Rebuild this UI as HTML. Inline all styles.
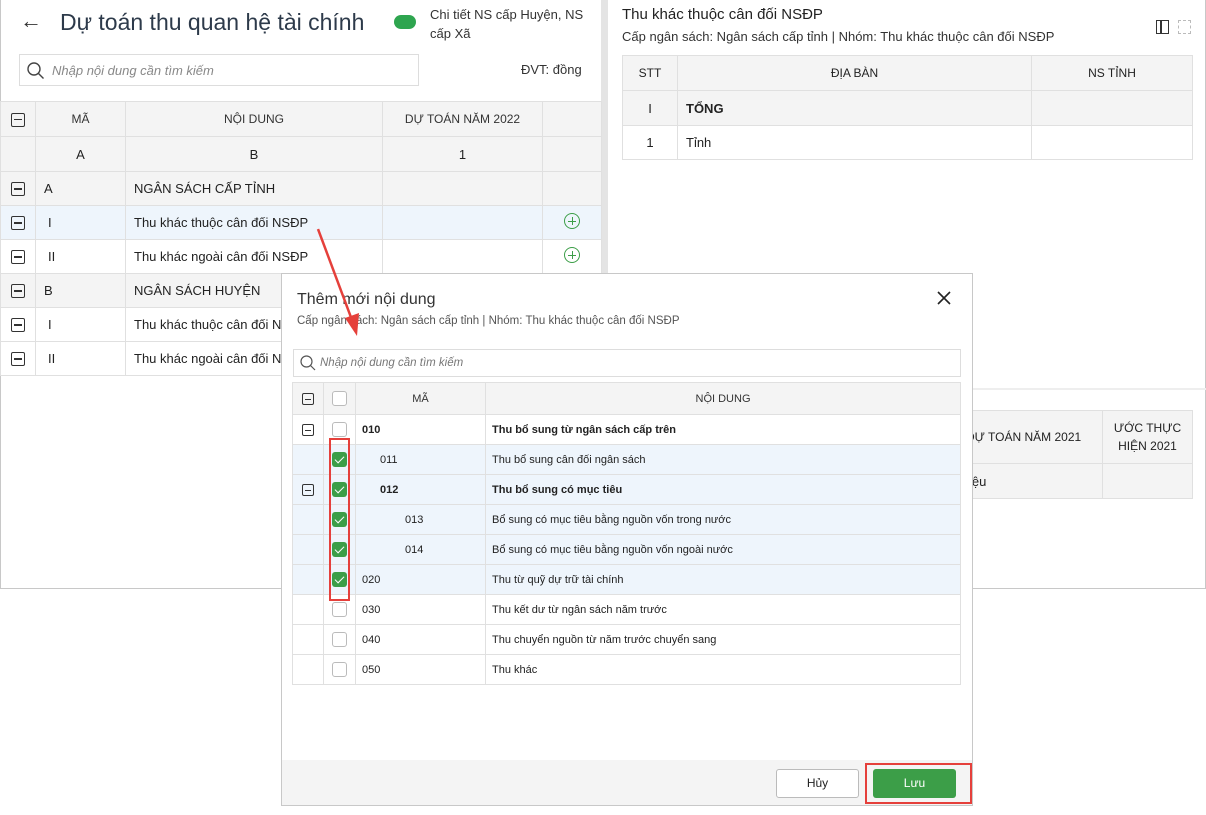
<!DOCTYPE html>
<html><head><meta charset="utf-8"><style>
*{box-sizing:border-box;margin:0;padding:0}
body{width:1206px;height:815px;background:#fff;font-family:"Liberation Sans",sans-serif;position:relative;overflow:hidden;color:#222;font-size:13px}
.abs{position:absolute}
table{border-collapse:collapse;table-layout:fixed}
td{border:1px solid #e0e0e0;font-size:13px;white-space:nowrap;overflow:hidden}
.m td{font-size:11px}
.tg{display:inline-block;width:14px;height:14px;border:1.5px solid #333;border-radius:2px;position:relative;vertical-align:middle}
.tg:after{content:"";position:absolute;left:2px;right:2px;top:5px;height:1.5px;background:#333}
.cb{display:inline-block;width:15px;height:15px;border:1px solid #bbb;border-radius:3px;background:#fff;vertical-align:middle}
.ck{display:inline-block;width:15px;height:15px;border-radius:3px;background:#3c9e48;vertical-align:middle;position:relative}
.ck:after{content:"";position:absolute;left:5px;top:2px;width:4px;height:8px;border:solid #fff;border-width:0 1.5px 1.5px 0;transform:rotate(45deg)}
.plus{display:inline-block;width:16px;height:16px;border:1.3px solid #3c9e48;border-radius:50%;position:relative}
.plus:before{content:"";position:absolute;left:3px;right:3px;top:6.5px;height:1.3px;background:#3c9e48}
.plus:after{content:"";position:absolute;top:3px;bottom:3px;left:6.5px;width:1.3px;background:#3c9e48}
</style></head><body>
<div class="abs" style="left:0;top:0;width:1206px;height:589px;border:1px solid #c8c8c8;border-top:none"></div>
<div class="abs" style="left:601px;top:0;width:7px;height:589px;background:#e4e4e4"></div>
<div class="abs" style="left:20px;top:8px;font-size:22px;color:#333">←</div>
<div class="abs" style="left:60px;top:9px;font-size:23px;color:#2d3a4a">Dự toán thu quan hệ tài chính</div>
<div class="abs" style="left:394px;top:15px;width:22px;height:14px;background:#2ea54f;border-radius:7px"></div>
<div class="abs" style="left:430px;top:5px;font-size:13px;color:#333;line-height:19px;width:160px">Chi tiết NS cấp Huyện, NS cấp Xã</div>
<div class="abs" style="left:19px;top:54px;width:400px;height:32px;border:1px solid #ddd;background:#fff">
<svg class="abs" style="left:7px;top:7px" width="18" height="18" viewBox="0 0 18 18"><circle cx="7" cy="7" r="6" fill="none" stroke="#444" stroke-width="1.4"/><path d="M11.5 11.5L16.5 16.5" stroke="#444" stroke-width="1.4"/></svg>
<span class="abs" style="left:32px;top:8px;font-style:italic;color:#888;font-size:13px">Nhập nội dung cần tìm kiếm</span></div>
<div class="abs" style="left:521px;top:62px;font-size:13px;color:#333">ĐVT: đồng</div>
<table class="abs" style="left:0;top:101px;width:601px">
<colgroup><col style="width:35px"><col style="width:90px"><col style="width:257px"><col style="width:160px"><col style="width:59px"></colgroup>
<tr style="height:35px;background:#f4f4f4;color:#333;text-align:center"><td><span class="tg"></span></td><td style="font-size:12px">MÃ</td><td style="font-size:12px">NỘI DUNG</td><td style="font-size:12px">DỰ TOÁN NĂM 2022</td><td></td></tr>
<tr style="height:35px;background:#f4f4f4;text-align:center"><td></td><td>A</td><td>B</td><td>1</td><td></td></tr>
<tr style="height:34px;background:#f4f4f4"><td style="text-align:center"><span class="tg"></span></td><td style="padding-left:8px">A</td><td style="padding-left:8px">NGÂN SÁCH CẤP TỈNH</td><td></td><td></td></tr>
<tr style="height:34px;background:#eef5fc"><td style="text-align:center"><span class="tg"></span></td><td style="padding-left:12px">I</td><td style="padding-left:8px">Thu khác thuộc cân đối NSĐP</td><td></td><td style="text-align:center"><span class="plus"></span></td></tr>
<tr style="height:34px"><td style="text-align:center"><span class="tg"></span></td><td style="padding-left:12px">II</td><td style="padding-left:8px">Thu khác ngoài cân đối NSĐP</td><td></td><td style="text-align:center"><span class="plus"></span></td></tr>
<tr style="height:34px;background:#f4f4f4"><td style="text-align:center"><span class="tg"></span></td><td style="padding-left:8px">B</td><td style="padding-left:8px">NGÂN SÁCH HUYỆN</td><td></td><td></td></tr>
<tr style="height:34px"><td style="text-align:center"><span class="tg"></span></td><td style="padding-left:12px">I</td><td style="padding-left:8px">Thu khác thuộc cân đối NSĐP</td><td></td><td></td></tr>
<tr style="height:34px"><td style="text-align:center"><span class="tg"></span></td><td style="padding-left:12px">II</td><td style="padding-left:8px">Thu khác ngoài cân đối NSĐP</td><td></td><td></td></tr>
</table>
<div class="abs" style="left:622px;top:6px;font-size:15px;color:#222">Thu khác thuộc cân đối NSĐP</div>
<div class="abs" style="left:622px;top:29px;font-size:13px;color:#333">Cấp ngân sách: Ngân sách cấp tỉnh | Nhóm: Thu khác thuộc cân đối NSĐP</div>
<div class="abs" style="left:1156px;top:20px;width:13px;height:14px;border:1.5px solid #333"><div style="position:absolute;left:3px;top:0;bottom:0;width:1.5px;background:#333"></div></div>
<div class="abs" style="left:1178px;top:20px;width:13px;height:14px;border:1px dashed #bbb"></div>
<table class="abs" style="left:622px;top:55px;width:570px">
<colgroup><col style="width:55px"><col style="width:354px"><col style="width:161px"></colgroup>
<tr style="height:35px;background:#f4f4f4;text-align:center"><td style="font-size:12px">STT</td><td style="font-size:12px">ĐỊA BÀN</td><td style="font-size:12px">NS TỈNH</td></tr>
<tr style="height:35px;background:#f4f4f4"><td style="text-align:center">I</td><td style="padding-left:8px;font-weight:bold">TỔNG</td><td></td></tr>
<tr style="height:34px"><td style="text-align:center">1</td><td style="padding-left:8px">Tỉnh</td><td></td></tr>
</table>
<div class="abs" style="left:608px;top:388px;width:598px;height:2px;background:#eee"></div>
<table class="abs" style="left:940px;top:410px;width:252px">
<colgroup><col style="width:162px"><col style="width:90px"></colgroup>
<tr style="height:53px;background:#f4f4f4"><td style="padding-left:25px;font-size:12px">DỰ TOÁN NĂM 2021</td><td style="text-align:center;font-size:12px;line-height:18px;white-space:normal">ƯỚC THỰC HIỆN 2021</td></tr>
<tr style="height:35px;background:#f4f4f4"><td style="padding-left:28px">iệu</td><td></td></tr>
</table>
<div class="abs" style="left:281px;top:273px;width:692px;height:533px;background:#fff;border:1px solid #c8c8c8;overflow:hidden">
<div class="abs" style="left:15px;top:17px;font-size:16px;color:#333">Thêm mới nội dung</div>
<div class="abs" style="left:15px;top:41px;font-size:11.5px;color:#555">Cấp ngân sách: Ngân sách cấp tỉnh | Nhóm: Thu khác thuộc cân đối NSĐP</div>
<svg class="abs" style="left:655px;top:17px" width="14" height="14" viewBox="0 0 14 14"><path d="M1 1L13 13M13 1L1 13" stroke="#222" stroke-width="1.6"/></svg>
<div class="abs" style="left:11px;top:75px;width:668px;height:28px;border:1px solid #ddd">
<svg class="abs" style="left:6px;top:5px" width="16" height="16" viewBox="0 0 16 16"><circle cx="6.5" cy="6.5" r="5.5" fill="none" stroke="#555" stroke-width="1.2"/><path d="M10.5 10.5L15 15" stroke="#555" stroke-width="1.2"/></svg>
<span class="abs" style="left:26px;top:7px;font-style:italic;color:#777;font-size:11.5px">Nhập nội dung cần tìm kiếm</span></div>
<div class="abs" style="left:0;top:486px;width:690px;height:45px;background:#f4f4f4"></div>
<div class="abs" style="left:494px;top:495px;width:83px;height:29px;background:#fff;border:1px solid #bbb;border-radius:3px;text-align:center;line-height:27px;font-size:12px">Hủy</div>
<div class="abs" style="left:591px;top:495px;width:83px;height:29px;background:#3c9e48;border-radius:3px;text-align:center;line-height:29px;font-size:12px;color:#fff">Lưu</div>
<div class="abs" style="left:583px;top:489px;width:107px;height:41px;border:2px solid #e5403b"></div>
</div>
<table class="abs m" style="left:292px;top:382px;width:668px">
<colgroup><col style="width:31px"><col style="width:32px"><col style="width:130px"><col style="width:475px"></colgroup>
<tr style="height:32px;background:#f4f4f4;color:#333;text-align:center"><td><span class="tg" style="width:12px;height:12px;border-width:1.3px"></span></td><td><span class="cb"></span></td><td>MÃ</td><td>NỘI DUNG</td></tr>
<tr style="height:30px;font-weight:bold"><td style="text-align:center"><span class="tg" style="width:12px;height:12px;border-width:1.3px"></span></td><td style="text-align:center"><span class="cb"></span></td><td style="padding-left:6px">010</td><td style="padding-left:6px">Thu bổ sung từ ngân sách cấp trên</td></tr>
<tr style="height:30px;background:#eef5fc"><td></td><td style="text-align:center"><span class="ck"></span></td><td style="padding-left:24px">011</td><td style="padding-left:6px">Thu bổ sung cân đối ngân sách</td></tr>
<tr style="height:30px;background:#eef5fc;font-weight:bold"><td style="text-align:center"><span class="tg" style="width:12px;height:12px;border-width:1.3px"></span></td><td style="text-align:center"><span class="ck"></span></td><td style="padding-left:24px">012</td><td style="padding-left:6px">Thu bổ sung có mục tiêu</td></tr>
<tr style="height:30px;background:#eef5fc"><td></td><td style="text-align:center"><span class="ck"></span></td><td style="padding-left:49px">013</td><td style="padding-left:6px">Bổ sung có mục tiêu bằng nguồn vốn trong nước</td></tr>
<tr style="height:30px;background:#eef5fc"><td></td><td style="text-align:center"><span class="ck"></span></td><td style="padding-left:49px">014</td><td style="padding-left:6px">Bổ sung có mục tiêu bằng nguồn vốn ngoài nước</td></tr>
<tr style="height:30px;background:#eef5fc"><td></td><td style="text-align:center"><span class="ck"></span></td><td style="padding-left:6px">020</td><td style="padding-left:6px">Thu từ quỹ dự trữ tài chính</td></tr>
<tr style="height:30px"><td></td><td style="text-align:center"><span class="cb"></span></td><td style="padding-left:6px">030</td><td style="padding-left:6px">Thu kết dư từ ngân sách năm trước</td></tr>
<tr style="height:30px"><td></td><td style="text-align:center"><span class="cb"></span></td><td style="padding-left:6px">040</td><td style="padding-left:6px">Thu chuyển nguồn từ năm trước chuyển sang</td></tr>
<tr style="height:30px"><td></td><td style="text-align:center"><span class="cb"></span></td><td style="padding-left:6px">050</td><td style="padding-left:6px">Thu khác</td></tr>
</table>
<div class="abs" style="left:329px;top:438px;width:21px;height:163px;border:2px solid #e5403b"></div>
<svg class="abs" style="left:0;top:0" width="1206" height="815"><path d="M318 229L352 320" stroke="#e5403b" stroke-width="2.5"/><path d="M345 318L357 336L359 313Z" fill="#e5403b"/></svg>
</body></html>
